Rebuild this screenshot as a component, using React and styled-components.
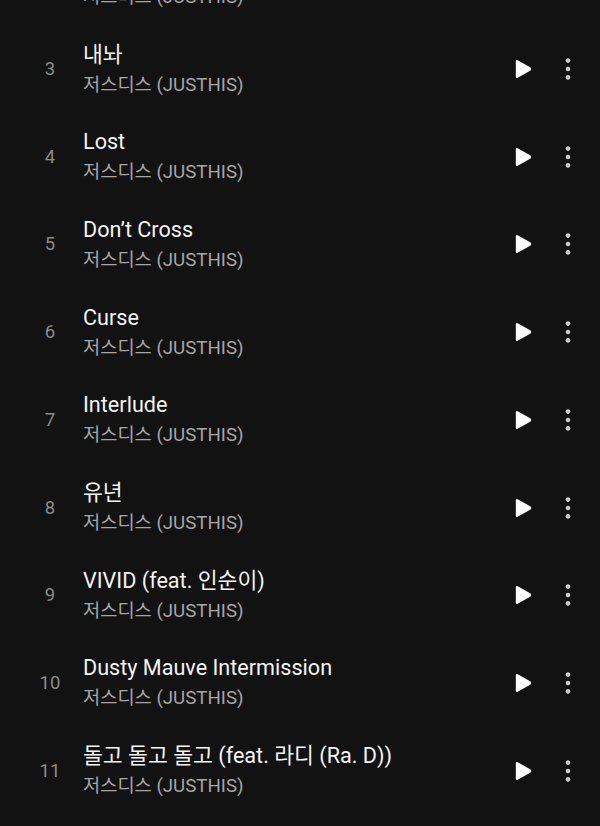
import React from "react";
import styled, { createGlobalStyle } from "styled-components";

const Global = createGlobalStyle`
  html, body { margin: 0; padding: 0; background: #121212; }
  body { font-family: Roboto, "Noto Sans CJK KR", sans-serif; overflow: hidden; }
`;

const List = styled.ul`
  list-style: none;
  margin: -62.5px 0 0 0;
  padding: 0;
  width: 600px;
`;

const Row = styled.li`
  display: grid;
  grid-template-columns: 83px 1fr auto;
  align-items: center;
  height: 87.71px;
  padding-right: 12px;
`;

const Num = styled.span`
  text-align: center;
  padding-left: 17px;
  font-size: 18.5px;
  color: #8a8a8a;
`;

const Texts = styled.div`
  display: flex;
  flex-direction: column;
  gap: 5px;
  min-width: 0;
`;

const Title = styled.span`
  font-size: 21.6px;
  color: #f4f4f4;
  line-height: 26px;
  white-space: nowrap;
`;

const Sub = styled.span`
  font-size: 18.7px;
  color: #a6a6a6;
  line-height: 24px;
  white-space: nowrap;
`;

const Actions = styled.div`
  display: flex;
  align-items: center;
  gap: 4.5px;
`;

const IconBtn = styled.button`
  background: none;
  border: none;
  padding: 0;
  width: 40px;
  height: 40px;
  display: flex;
  align-items: center;
  justify-content: center;
`;

const tracks = [
  [2, "틀려"],
  [3, "내놔"],
  [4, "Lost"],
  [5, "Don’t Cross"],
  [6, "Curse"],
  [7, "Interlude"],
  [8, "유년"],
  [9, "VIVID (feat. 인순이)"],
  [10, "Dusty Mauve Intermission"],
  [11, "돌고 돌고 돌고 (feat. 라디 (Ra. D))"],
];

const Play = () => (
  <svg width="17" height="20" viewBox="0 0 17 20">
    <path
      d="M0.8 2.4 Q0.8 0.3 2.7 1.3 L15.6 8.5 Q17 10 15.6 11.5 L2.7 18.7 Q0.8 19.7 0.8 17.6 Z"
      fill="#ffffff"
    />
  </svg>
);

const More = () => (
  <svg width="6" height="22" viewBox="0 0 6 22">
    <circle cx="3" cy="2.6" r="2.3" fill="#cccccc" />
    <circle cx="3" cy="11" r="2.3" fill="#cccccc" />
    <circle cx="3" cy="19.4" r="2.3" fill="#cccccc" />
  </svg>
);

export default function App() {
  return (
    <>
      <Global />
      <List>
        {tracks.map(([n, t]) => (
          <Row key={n}>
            <Num>{n}</Num>
            <Texts>
              <Title>{t}</Title>
              <Sub>저스디스 (JUSTHIS)</Sub>
            </Texts>
            <Actions>
              <IconBtn aria-label="재생"><Play /></IconBtn>
              <IconBtn aria-label="더보기"><More /></IconBtn>
            </Actions>
          </Row>
        ))}
      </List>
    </>
  );
}
